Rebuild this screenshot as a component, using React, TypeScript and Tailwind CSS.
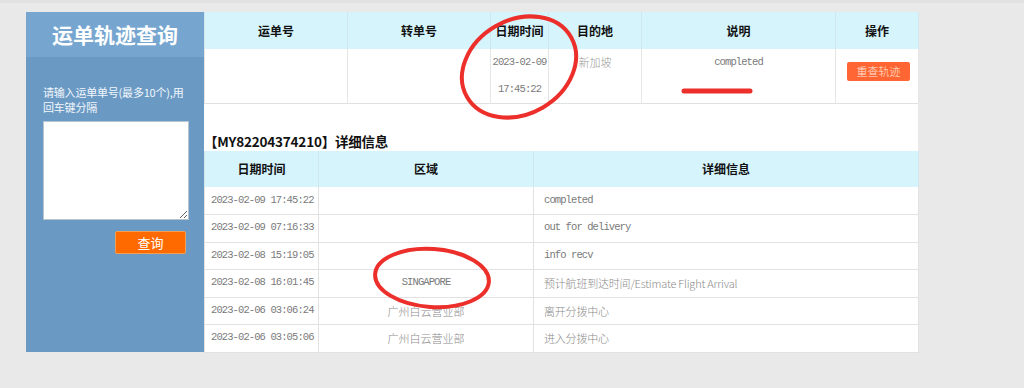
const topCols = [
  { title: "运单号", w: "w-[143px]" },
  { title: "转单号", w: "w-[143px]" },
  { title: "日期时间", w: "w-[58px]" },
  { title: "目的地", w: "w-[93px]" },
  { title: "说明", w: "w-[194px]" },
  { title: "操作", w: "w-[83px]" },
];

const details = [
  { time: "2023-02-09 17:45:22", area: "", info: "completed" },
  { time: "2023-02-09 07:16:33", area: "", info: "out for delivery" },
  { time: "2023-02-08 15:19:05", area: "", info: "info recv" },
  { time: "2023-02-08 16:01:45", area: "SINGAPORE", info: "预计航班到达时间/Estimate Flight Arrival" },
  { time: "2023-02-06 03:06:24", area: "广州白云营业部", info: "离开分拨中心" },
  { time: "2023-02-06 03:05:06", area: "广州白云营业部", info: "进入分拨中心" },
];

const mono = "font-['Liberation_Mono','Noto_Sans_CJK_SC',monospace] text-[10.5px] tracking-[-0.9px] text-[#7a7a7a]";

export default function App() {
  return (
    <div className="relative w-[1024px] h-[388px] overflow-hidden bg-[#e9e9e9] font-['Noto_Sans_CJK_SC',sans-serif]">
      <div className="h-[3px] bg-[#e2e2e2]" />
      <div className="flex pt-[9px] pl-[26px]">
        {/* sidebar */}
        <div className="w-[178px] h-[340px] bg-[#6a9ac4] flex flex-col">
          <div className="h-[45px] bg-[#76a6d0] flex items-center justify-center text-white text-[21px] font-bold">
            运单轨迹查询
          </div>
          <div className="pl-[17px] pr-[4px] pt-[28px] text-[11px] leading-[15px] text-[#f2f6fb] tracking-[-0.2px]">
            请输入运单单号(最多10个),用
            <br />
            回车键分隔
          </div>
          <textarea className="ml-[17px] mt-[6px] w-[146px] h-[99px] bg-white border border-[#b8c4cc]" />
          <div className="flex justify-end pr-[18px] mt-[11px]">
            <button className="w-[71px] h-[23px] bg-[#ff6a00] border border-[#f0a050] rounded-[2px] text-white text-[13px] leading-none">
              查询
            </button>
          </div>
        </div>

        {/* main */}
        <div className="w-[714px] h-[340px] bg-white">
          <table className="table-fixed w-full border-collapse">
            <thead>
              <tr className="h-[37px] bg-[#d5f4fc]">
                {topCols.map((c) => (
                  <th key={c.title} className={`${c.w} border-x border-[#d2e6ee] text-[12px] font-bold text-[#111]`}>
                    {c.title}
                  </th>
                ))}
              </tr>
            </thead>
            <tbody>
              <tr className="h-[52px] border-b border-[#e0e0e0] align-top">
                <td className="border-x border-[#e6e6e6]" />
                <td className="border-x border-[#e6e6e6]" />
                <td className={`border-x border-[#e6e6e6] text-center leading-[27px] ${mono}`}>
                  2023-02-09
                  <br />
                  17:45:22
                </td>
                <td className="border-x border-[#e6e6e6] text-center text-[11px] font-light text-[#999] pt-[5px]">
                  新加坡
                </td>
                <td className={`border-x border-[#e6e6e6] text-center pt-[6px] ${mono}`}>completed</td>
                <td className="border-x border-[#e6e6e6] pt-[8px] pl-[11px]">
                  <button className="w-[63px] h-[19px] bg-[#ff6633] rounded-[2px] text-[11px] leading-none text-[#ffe6dc] font-light">
                    重查轨迹
                  </button>
                </td>
              </tr>
            </tbody>
          </table>

          <div className="h-[47px] flex items-end pb-[1px] text-[13.5px] font-bold text-[#111] leading-[18px] tracking-[-0.2px]">
            【MY82204374210】详细信息
          </div>

          <table className="table-fixed w-full border-collapse">
            <thead>
              <tr className="h-[36px] bg-[#d5f4fc]">
                <th className="w-[114px] border-x border-[#d2e6ee] text-[12px] font-bold text-[#111]">日期时间</th>
                <th className="w-[215px] border-x border-[#d2e6ee] text-[12px] font-bold text-[#111]">区域</th>
                <th className="w-[385px] border-x border-[#d2e6ee] text-[12px] font-bold text-[#111]">详细信息</th>
              </tr>
            </thead>
            <tbody>
              {details.map((d) => (
                <tr key={d.time} className="h-[27.5px] border-b border-[#e2e2e2]">
                  <td className={`border-x border-[#e2e2e2] pl-[6px] ${mono}`}>{d.time}</td>
                  <td
                    className={
                      /^[A-Z]/.test(d.area)
                        ? `border-x border-[#e2e2e2] text-center ${mono}`
                        : "border-x border-[#e2e2e2] text-center text-[11px] font-light text-[#8a8a8a]"
                    }
                  >
                    {d.area}
                  </td>
                  <td
                    className={
                      /^[a-z]/.test(d.info)
                        ? `border-x border-[#e2e2e2] pl-[10px] ${mono}`
                        : "border-x border-[#e2e2e2] pl-[10px] text-[11px] font-light text-[#8a8a8a] tracking-[-0.2px]"
                    }
                  >
                    {d.info}
                  </td>
                </tr>
              ))}
            </tbody>
          </table>
        </div>
      </div>

      {/* red hand-drawn marks */}
      <svg className="absolute inset-0 pointer-events-none" width="1024" height="388" viewBox="0 0 1024 388">
        <ellipse cx="519" cy="67" rx="60" ry="47" transform="rotate(-30 519 67)" fill="none" stroke="#ec2f2a" strokeWidth="4" />
        <line x1="684" y1="91" x2="750" y2="91" stroke="#ec2f2a" strokeWidth="5" strokeLinecap="round" />
        <ellipse cx="432" cy="278" rx="57" ry="29" transform="rotate(4 432 278)" fill="none" stroke="#ec2f2a" strokeWidth="4" />
      </svg>
    </div>
  );
}
